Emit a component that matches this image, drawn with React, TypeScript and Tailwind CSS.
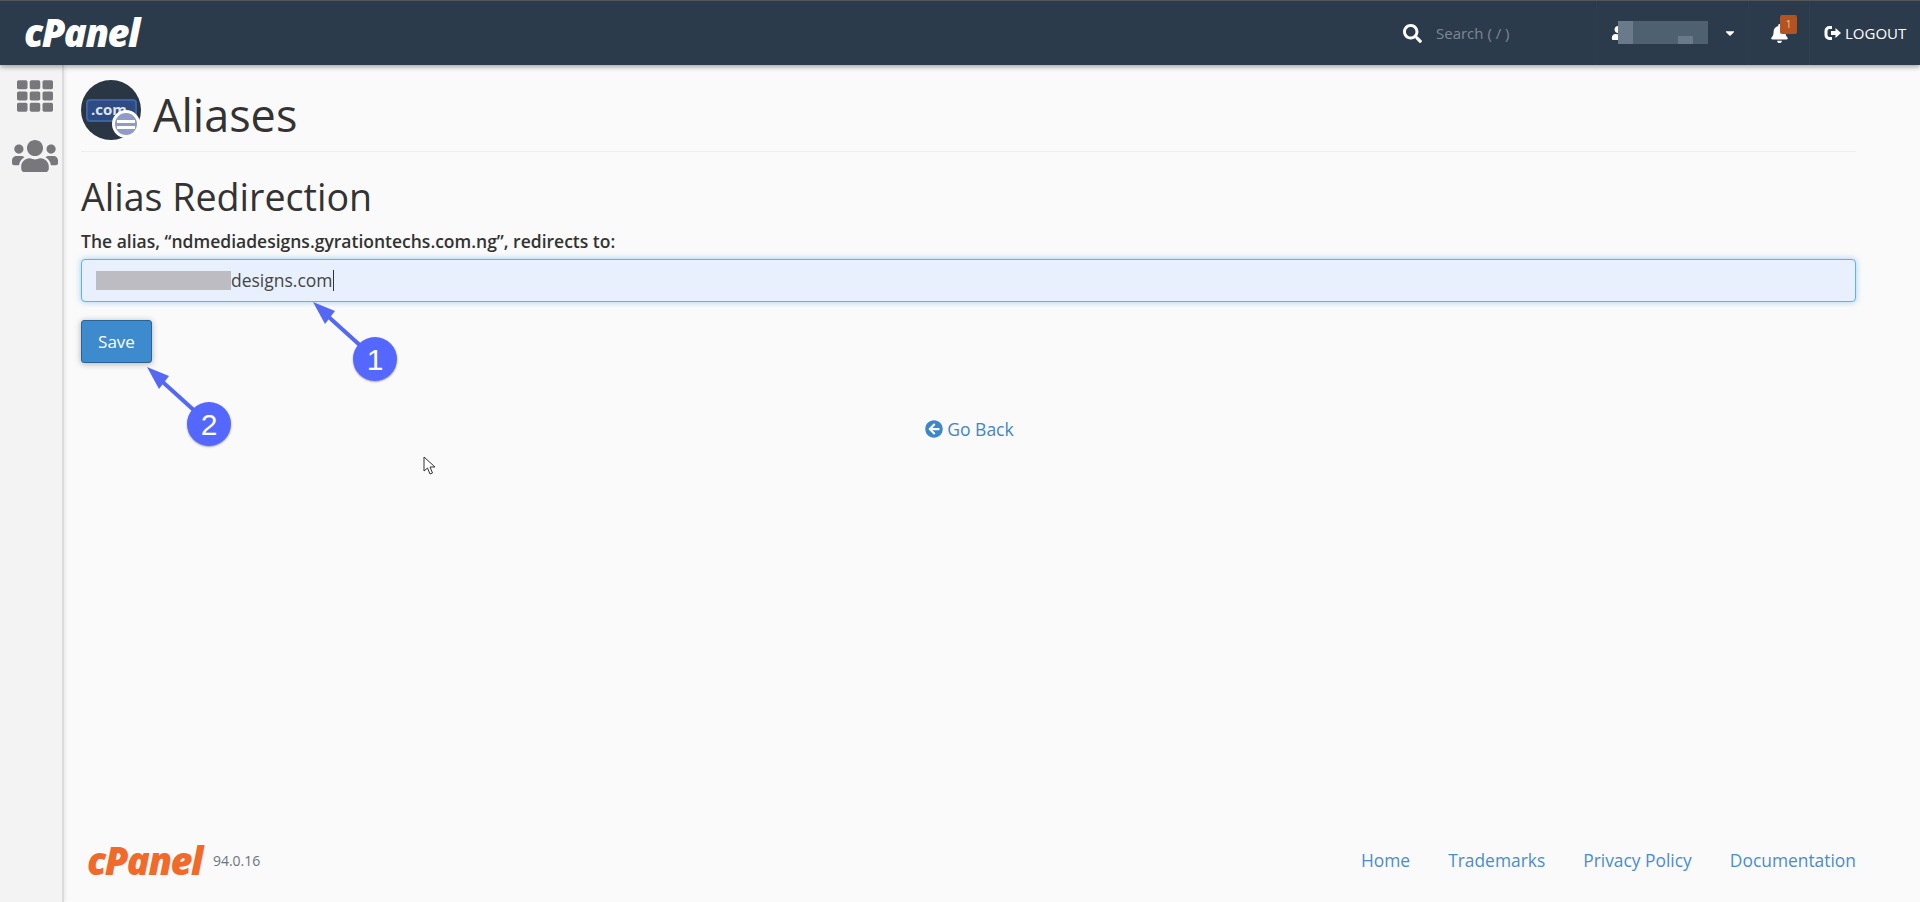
import { FaArrowCircleLeft, FaBell, FaCaretDown, FaSearch, FaTh, FaUser, FaUsers } from "react-icons/fa";

const sans = { fontFamily: '"Open Sans", sans-serif' };

// Numbered callout arrows drawn over the form
const Callout = ({ n, className }: { n: number; className: string }) => (
  <div className={`absolute w-[90px] h-[90px] ${className}`}>
    <svg width="90" height="90" viewBox="0 0 90 90" className="absolute inset-0">
      <line x1="8" y1="8" x2="50" y2="46" stroke="#5468f5" strokeWidth="4" />
      <path d="M0 0 L22 9 L12 22 Z" fill="#5468f5" />
    </svg>
    <div className="absolute left-[40px] top-[35px] w-[44px] h-[44px] rounded-full bg-[#5468ff] text-white text-[30px] flex items-center justify-center shadow-[0_1px_2px_rgba(0,0,0,0.35)] font-['Liberation_Sans',sans-serif]">
      {n}
    </div>
  </div>
);

const App = () => {
  return (
    <div className="h-[902px] w-[1920px] overflow-hidden relative flex flex-col bg-[#fafafa] text-[#333]" style={sans}>
      {/* Top bar */}
      <header className="h-[65px] shrink-0 bg-[#2c3b4c] border-t-[1px] border-[#555] flex items-stretch relative z-10 shadow-[0_2px_5px_rgba(0,0,0,0.35)]">
        <div className="pl-[24px] w-[1403px] flex items-center pb-[2px]">
          <span className="text-white text-[38px] font-extrabold italic tracking-[-1.5px] leading-none">cPanel</span>
        </div>
        <div className="w-[193px] flex items-center">
          <FaSearch className="text-white text-[19px]" />
          <span className="ml-[14px] text-[15px] text-[#7d8893]">Search ( / )</span>
        </div>
        <div className="w-[152px] border-l border-dotted border-[#31415a] flex items-center relative">
          <FaUser className="text-white text-[14px] ml-[14px]" />
          <div className="absolute left-[21px] top-[20px] w-[90px] h-[23px] bg-[#4f6070]">
            <div className="absolute left-0 top-0 w-[15px] h-[23px] bg-[#6a7a8a]" />
            <div className="absolute left-[60px] top-[15px] w-[15px] h-[8px] bg-[#6a7a8a]" />
          </div>
          <FaCaretDown className="absolute left-[126px] text-white text-[14px]" />
        </div>
        <div className="w-[61px] border-l border-dotted border-[#31415a] flex items-center relative">
          <FaBell className="text-white text-[19px] ml-[21px]" />
          <div className="absolute left-[31px] top-[14px] w-[17px] h-[19px] rounded-[2px] bg-[#b3531f] text-[#e6c9a8] text-[10px] flex items-center justify-center">1</div>
        </div>
        <div className="flex-1 border-l border-dotted border-[#31415a] flex items-center text-white pl-[14px]">
          <svg width="18" height="16" viewBox="0 0 18 16">
            <path d="M8 2.5 H5.5 A3.5 3.5 0 0 0 2 6 V10 A3.5 3.5 0 0 0 5.5 13.5 H8" fill="none" stroke="#fff" strokeWidth="3" />
            <path d="M7 6 H11.5 V3 L17 8 L11.5 13 V10 H7 Z" fill="#fff" />
          </svg>
          <span className="ml-[3px] text-[15px]">LOGOUT</span>
        </div>
      </header>

      <div className="flex-1 flex min-h-0">
        {/* Side nav */}
        <aside className="w-[64px] shrink-0 bg-[#f3f3f3] border-r-[2px] border-[#dcdcdc] shadow-[2px_0_3px_rgba(0,0,0,0.06)] flex flex-col items-center pt-[13px] gap-[22px] text-[#78787c]">
          <FaTh className="text-[40px] h-[36px] ml-[8px]" />
          <FaUsers className="text-[46px] h-[40px] ml-[8px]" />
        </aside>

        <main className="flex-1 flex flex-col pl-[17px] pr-[64px] min-w-0">
          <div className="h-[87px] border-b border-[#eeeeee] flex items-end pb-[11px] gap-[12px]">
            <div className="w-[60px] h-[60px] rounded-full bg-[#2b3644] relative shrink-0">
              <div className="absolute left-[5px] top-[19px] w-[51px] h-[23px] rounded-[4px] bg-[#2f4c82] border-[2px] border-[#3b63a8] text-[#dfe4ee] text-[15px] font-bold leading-[17px] pl-[3px]">.com</div>
              <div className="absolute left-[31px] top-[30px] w-[28px] h-[28px] rounded-full bg-[#8f9cc8] border-[3px] border-white flex flex-col items-center justify-center gap-[3px]">
                <div className="w-[18px] h-[3px] bg-white" />
                <div className="w-[18px] h-[3px] bg-white" />
              </div>
            </div>
            <h1 className="text-[45px] leading-[60px] -mb-[5px] text-[#333]">Aliases</h1>
          </div>

          <h2 className="mt-[22px] text-[37.6px] leading-[46px] text-[#333]">Alias Redirection</h2>
          <label className="mt-[10px] text-[17.5px] leading-[22px] font-semibold text-[#333]">The alias, “ndmediadesigns.gyrationtechs.com.ng”, redirects to:</label>

          <div className="mt-[7px] h-[43px] rounded-[4px] bg-[#e8f0fe] border border-[#66afe9] shadow-[0_0_6px_rgba(102,175,233,0.6)] flex items-center pl-[14px] relative text-[17.5px] text-[#444]">
            <div className="w-[135px] h-[19px] bg-[#bcbcc2]" />
            <span>designs.com</span>
            <div className="w-px h-[21px] bg-[#333]" />
          </div>

          <button className="mt-[18px] w-[71px] h-[43px] rounded-[3px] bg-[#3d8bcd] border border-[#2a6496] text-white text-[17px] shadow-[0_1px_6px_rgba(0,0,0,0.3)]">Save</button>

          <a className="mt-[55px] self-center flex items-center gap-[4px] text-[17.5px] leading-[22px] text-[#3d87c9] pl-[2px]">
            <FaArrowCircleLeft className="text-[18px]" />
            Go Back
          </a>

          <footer className="mt-auto h-[74px] flex items-start justify-between pt-[12px]">
            <div className="flex items-center pl-[6px] h-[40px]">
              <span className="text-[#f26a2a] text-[38px] font-extrabold italic tracking-[-1.5px] leading-none">cPanel</span>
              <span className="ml-[11px] text-[14px] text-[#6c7480]">94.0.16</span>
            </div>
            <nav className="flex gap-[38px] text-[17.4px] text-[#4a8dcb] h-[40px] items-center">
              <a>Home</a>
              <a>Trademarks</a>
              <a>Privacy Policy</a>
              <a>Documentation</a>
            </nav>
          </footer>
        </main>
      </div>

      {/* Annotations on top of the screenshot */}
      <Callout n={1} className="left-[313px] top-[302px]" />
      <Callout n={2} className="left-[147px] top-[367px]" />

      {/* Mouse pointer */}
      <svg width="14" height="20" viewBox="0 0 14 20" className="absolute left-[423px] top-[456px]">
        <path d="M1 1 L1 15 L4.5 12 L7 18 L9.5 17 L7 11 L12 11 Z" fill="#fff" stroke="#333" strokeWidth="1" />
      </svg>
    </div>
  );
};

export default App;
